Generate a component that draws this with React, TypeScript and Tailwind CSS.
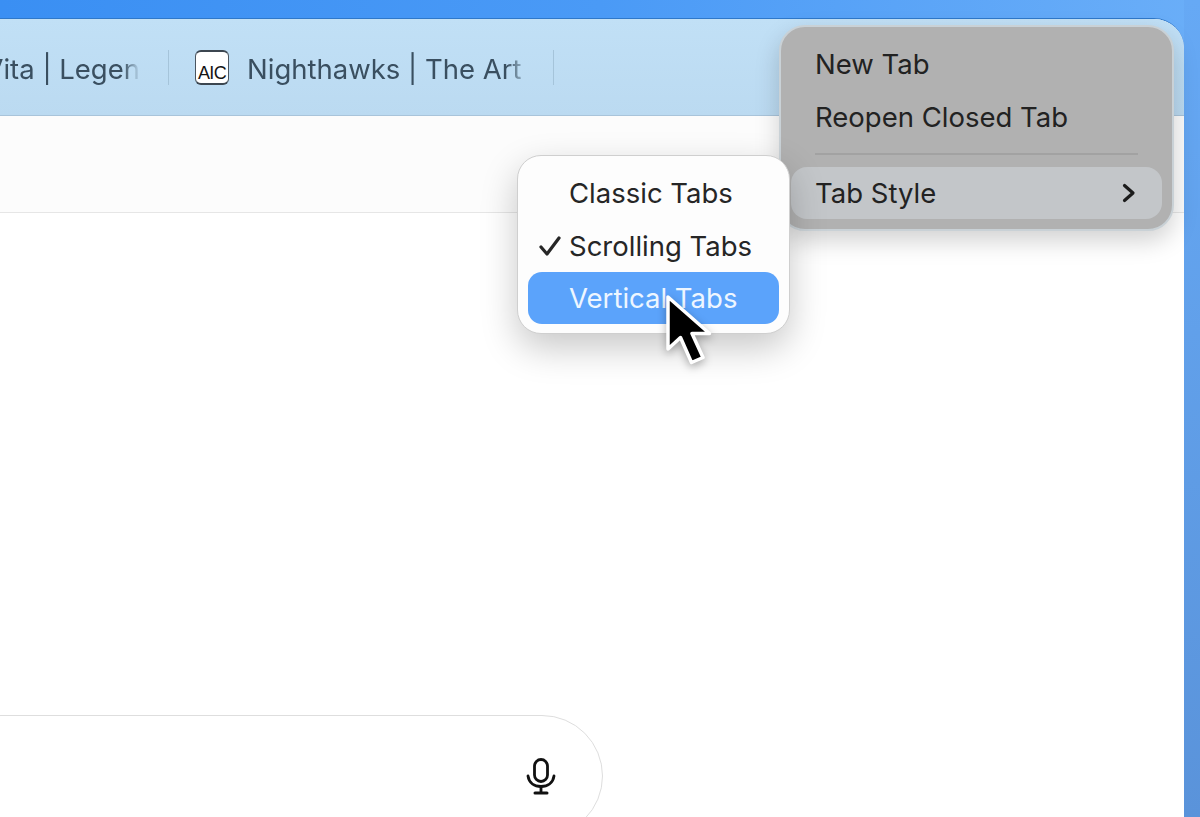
const font = "font-['Inter','Liberation_Sans',sans-serif]"

function AicIcon() {
  return (
    <div className="flex h-[35px] w-[34px] shrink-0 items-end justify-center overflow-hidden rounded-[6px] border-x border-y-2 border-x-[#4a5560] border-y-[#3c4650] bg-white">
      <span className="font-['Liberation_Sans',sans-serif] text-[18px] leading-[19px] tracking-[-0.6px] text-[#141414]">
        AIC
      </span>
    </div>
  )
}

function MicIcon() {
  return (
    <svg width="30" height="38" viewBox="0 0 30 38" fill="none" stroke="#111" strokeWidth="2.800" strokeLinecap="round">
      <rect x="8.500" y="2.500" width="13" height="22" rx="6.500" />
      <path d="M2 19c1 7 6.500 10.500 13 10.500S27 26 28 19" />
      <path d="M15 30v5" />
      <path d="M9 36h12" strokeWidth="3" />
    </svg>
  )
}

function Cursor() {
  return (
    <svg
      width="52"
      height="84"
      viewBox="0 0 52 84"
      className="absolute left-[662px] top-[292px] drop-shadow-[0_3px_4px_rgba(0,0,0,0.3)]"
    >
      <path
        d="M6 5v52l12.500-11.500 11 25 11.500-5-11-24h17.500z"
        fill="#000"
        stroke="#fff"
        strokeWidth="3.500"
        strokeLinejoin="round"
      />
    </svg>
  )
}

export default function App() {
  return (
    <div className={`relative h-[817px] w-[1200px] overflow-hidden bg-gradient-to-r from-[#3a8ff3] via-[#4a9af6] to-[#6aaef8] ${font}`}>
      <div className="absolute inset-y-0 right-0 w-[16px] bg-gradient-to-b from-[#66a9f5] to-[#5a93da]" />

      <div className="relative flex h-full flex-col pt-[18px] pr-[16px]">
        <div className="flex flex-1 flex-col overflow-hidden rounded-tr-[30px] border-t border-[#2f78c9] bg-white">
          {/* tab strip */}
          <div className="flex h-[97px] shrink-0 items-center border-b border-[#a9c4da] bg-gradient-to-b from-[#c1e0f6] to-[#bbdaf1] text-[#3a4f60]">
            <div className="mt-[6px] flex w-[140px] shrink-0 justify-end whitespace-nowrap text-[27.500px] font-[420] [mask-image:linear-gradient(to_right,black_88%,transparent)]">
              Vita | Legen
            </div>
            <div className="ml-[28px] h-[35px] w-px bg-[#a5c4da]" />
            <div className="ml-[26px]">
              <AicIcon />
            </div>
            <div className="ml-[18px] mt-[6px] w-[276px] shrink-0 whitespace-nowrap text-[27.500px] font-[420] [mask-image:linear-gradient(to_right,black_94%,rgba(0,0,0,0.3))]">
              Nighthawks | The Art
            </div>
            <div className="ml-[30px] h-[35px] w-px bg-[#a5c4da]" />
          </div>

          {/* toolbar */}
          <div className="h-[97px] shrink-0 border-b border-[#e6e6e6] bg-[#fcfcfc]" />

          {/* page */}
          <div className="flex-1 pt-[502px]">
            <div className="-ml-[60px] flex h-[122px] w-[663px] items-center justify-end rounded-full border border-[#dedede] bg-white pr-[46px]">
              <MicIcon />
            </div>
          </div>
        </div>
      </div>

      {/* tab bar context menu */}
      <div className="absolute left-[779px] top-[25px] h-[206px] w-[395px] rounded-[26px] border-2 border-[#c9d1d6] bg-[#b1b1b1] px-[10px] pt-[11px] text-[27.500px] font-[420] text-[#222] shadow-[0_10px_24px_rgba(0,0,0,0.18)]">
        <div className="flex h-[52px] items-center px-[24px] pt-[2px]">New Tab</div>
        <div className="flex h-[53px] items-center px-[24px] pt-[2px]">Reopen Closed Tab</div>
        <div className="mx-[24px] mt-[10px] h-[2px] bg-[#a2a2a2]" />
        <div className="mt-[12px] flex h-[52px] items-center justify-between rounded-[16px] bg-[#c3c6c9] px-[24px]">
          <span className="pt-[2px]">Tab Style</span>
          <svg width="14" height="20" viewBox="0 0 14 20" fill="none" stroke="#1c1c1c" strokeWidth="3.200" strokeLinecap="round" strokeLinejoin="round" className="mr-[2px]">
            <path d="M2.500 2.500 11 10l-8.500 7.500" />
          </svg>
        </div>
      </div>

      {/* tab style submenu */}
      <div className="absolute left-[517px] top-[155px] h-[179px] w-[273px] rounded-[24px] border border-[#cfcfcf] bg-[#fdfdfd] px-[10px] pt-[11px] text-[27.500px] font-[420] text-[#262626] shadow-[0_14px_36px_rgba(0,0,0,0.22)]">
        <div className="flex h-[52px] items-center pl-[41px] pt-[2px]">Classic Tabs</div>
        <div className="relative flex h-[53px] items-center pl-[41px] pt-[2px]">
          <svg width="22" height="20" viewBox="0 0 22 20" fill="none" stroke="#262626" strokeWidth="3.200" strokeLinecap="round" strokeLinejoin="round" className="absolute left-[11px] top-[17px]">
            <path d="M2 11l6 7L20 2" />
          </svg>
          Scrolling Tabs
        </div>
        <div className="flex h-[52px] items-center rounded-[14px] bg-[#5ba3fb] pl-[41px] pt-[2px] text-[#eef6ff]">Vertical Tabs</div>
      </div>

      <Cursor />
    </div>
  )
}
